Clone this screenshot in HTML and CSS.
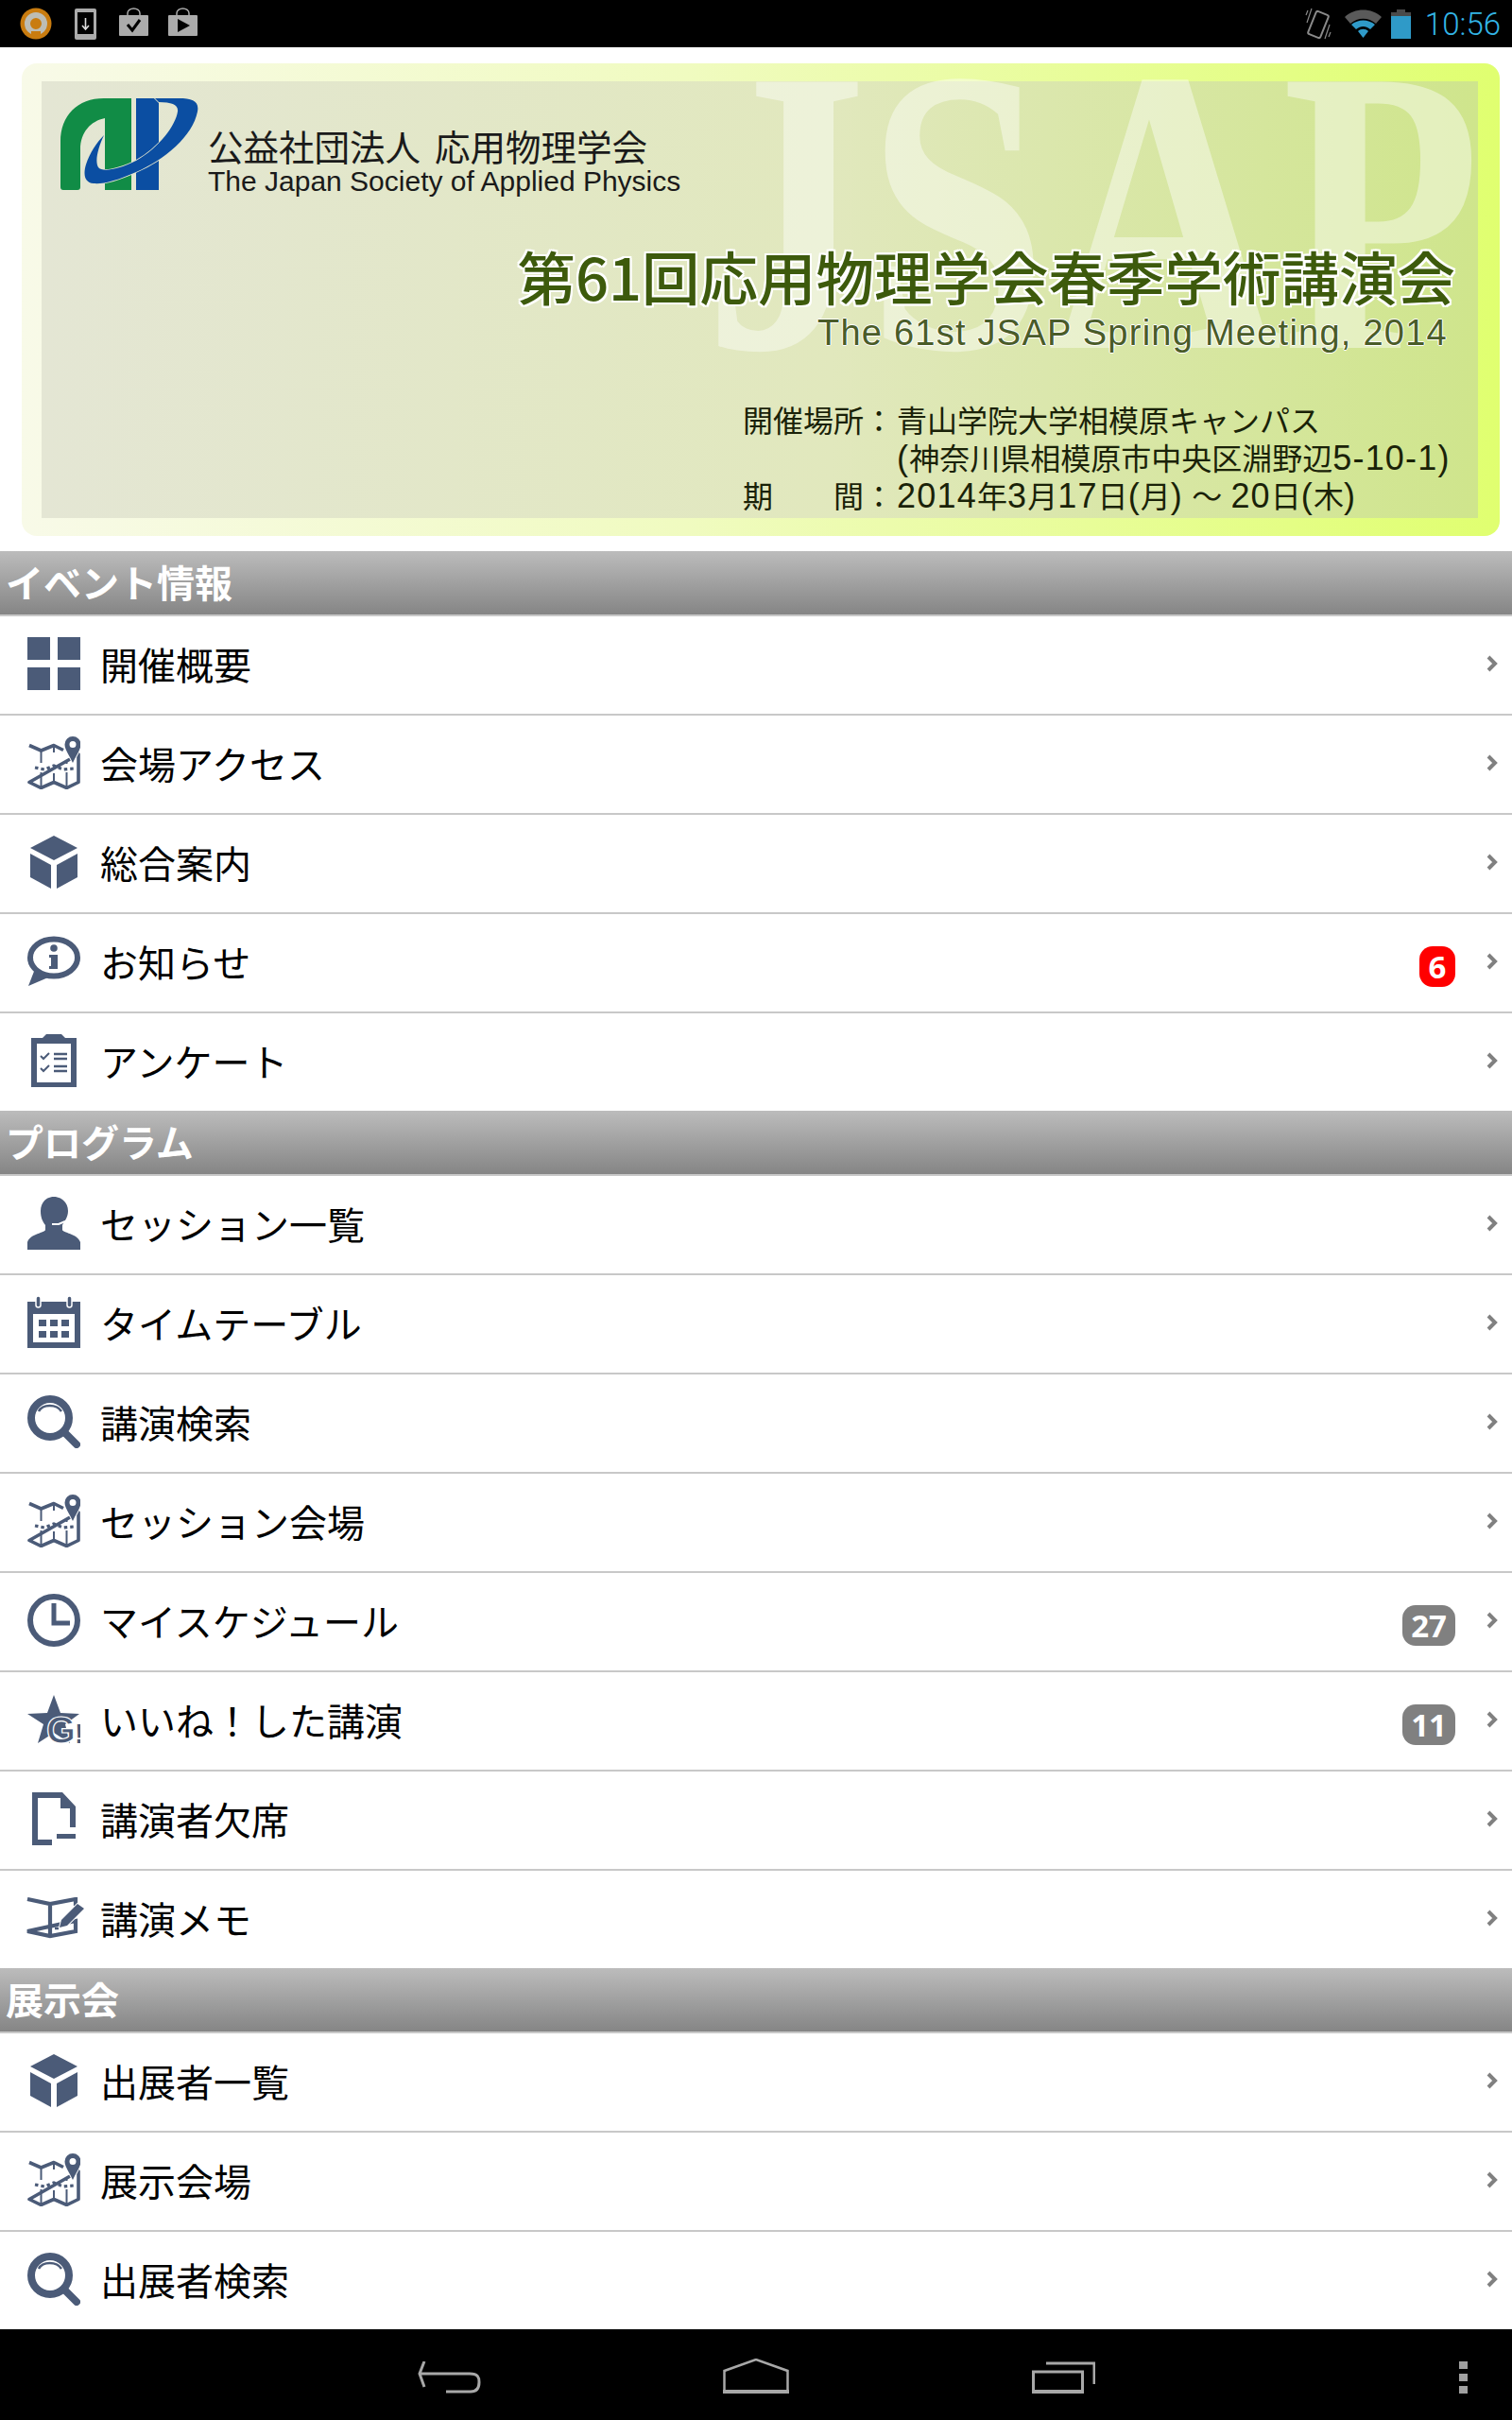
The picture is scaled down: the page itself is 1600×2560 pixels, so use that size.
FILE: index.html
```html
<!DOCTYPE html>
<html lang="ja">
<head>
<meta charset="utf-8">
<title>第61回応用物理学会春季学術講演会</title>
<link rel="stylesheet" href="styles.css">
</head>
<body>
<svg class="defs" width="0" height="0" aria-hidden="true">
  <defs>
    <symbol id="i-grid" viewBox="0 0 56 56"><rect x="0" y="0" width="24" height="24"/><rect x="32" y="0" width="24" height="24"/><rect x="0" y="32" width="24" height="24"/><rect x="32" y="32" width="24" height="24"/></symbol>
    <symbol id="i-map" viewBox="0 0 56 56"><path d="M2 9.500 14.500 15 28 9.500 38 14.500M54 19V48.500L41.500 54.500 28 48.500 14.500 54.500 2 48.500Z" fill="none" stroke="#4b5b78" stroke-width="3.600" stroke-linejoin="round"/><path d="M14.500 16V28M14.500 38V54M41.500 26V29M41.500 38V54M28 10V17M28 39V48" fill="none" stroke="#4b5b78" stroke-width="2"/><path d="M8 33 L18 35 L28 31 L38 35 L49 34" fill="none" stroke="#4b5b78" stroke-width="3.200" stroke-dasharray="3.500 3"/><path fill-rule="evenodd" stroke="#fff" stroke-width="2" paint-order="stroke" d="M48 0a8.500 8.500 0 0 1 8.500 8.500C56.500 14 51 21 48 28 45 21 39.500 14 39.500 8.500A8.500 8.500 0 0 1 48 0ZM48 5a3.500 3.500 0 1 0 0 7 3.500 3.500 0 0 0 0-7Z"/></symbol>
    <symbol id="i-cube" viewBox="0 0 56 56"><path d="M28 0 53 13 28 26 3 13Z"/><path d="M3 19 25 31V56L3 44Z"/><path d="M31 31 53 19V44L31 56Z"/></symbol>
    <symbol id="i-info" viewBox="0 0 56 56"><path d="M8 36 1 54 22 45Z"/><ellipse cx="28" cy="24" rx="25" ry="19.500" fill="#fff" stroke="#4b5b78" stroke-width="6"/><circle cx="28" cy="14" r="3.800"/><path d="M23 21H32V36H23V33H25V24H23Z"/></symbol>
    <symbol id="i-clip" viewBox="0 0 56 56"><path fill-rule="evenodd" d="M4 4h12l4-4h16l4 4h12v53H4ZM10 10V51H46V10Z"/><path d="M14 23l3 3 6-6M14 36l3 3 6-6" fill="none" stroke="#4b5b78" stroke-width="2"/><path d="M28 21h14M28 26h14M28 34h14M28 39h14" fill="none" stroke="#4b5b78" stroke-width="2.600"/></symbol>
    <symbol id="i-person" viewBox="0 0 56 56"><path d="M28 0C36 0 43 6 43 15 43 22 39 26 37 30V35C37 38 53 39 56 48V56H0V48C3 39 19 38 19 35V30C16 26 14 22 14 15 14 6 20 0 28 0Z"/><path d="M26 29H33L40 26" fill="none" stroke="#fff" stroke-width="2"/></symbol>
    <symbol id="i-cal" viewBox="0 0 56 56"><path fill-rule="evenodd" d="M0 6H56V55H0ZM6 19V49H50V19Z"/><rect x="9" y="0" width="5" height="12" rx="2.500" fill="#4b5b78" stroke="#fff" stroke-width="1.500"/><rect x="42" y="0" width="5" height="12" rx="2.500" fill="#4b5b78" stroke="#fff" stroke-width="1.500"/><path d="M12 25h8v7h-8zM24 25h8v7h-8zM36 25h8v7h-8zM12 37h8v7h-8zM24 37h8v7h-8zM36 37h8v7h-8z"/></symbol>
    <symbol id="i-search" viewBox="0 0 56 56"><circle cx="24" cy="24" r="20" fill="none" stroke="#4b5b78" stroke-width="8"/><path d="M40 40 52 52" fill="none" stroke="#4b5b78" stroke-width="8" stroke-linecap="round"/><path d="M12 17C16 9 31 9 36 17" fill="none" stroke="#4b5b78" stroke-width="2.500"/></symbol>
    <symbol id="i-clock" viewBox="0 0 56 56"><circle cx="28" cy="28" r="25" fill="none" stroke="#4b5b78" stroke-width="6"/><path d="M28 10V31H45" fill="none" stroke="#4b5b78" stroke-width="5"/></symbol>
    <symbol id="i-star" viewBox="0 0 56 56"><path d="M28 2 35 21 55 22 40 33 45 53 28 42 11 53 17 33 0 22 21 21Z"/><text x="20" y="53" class="star-g">G</text><text x="50" y="53" class="star-x">!</text></symbol>
    <symbol id="i-doc" viewBox="0 0 56 56"><path d="M5 0H37L51 15V37H45V17H35V6H11V50H26V56H5Z"/><rect x="31" y="44" width="20" height="5"/></symbol>
    <symbol id="i-book" viewBox="0 0 62 44"><path d="M2 2 26 7 53 2V9M53 25V36L26 41 2 36ZM26 7V41" fill="none" stroke="#4b5b78" stroke-width="4.200"/><path d="M55 7 62 12 44 30 36 32 38 24Z" stroke="#fff" stroke-width="2" paint-order="stroke"/><path d="M31 33h4" stroke="#4b5b78" stroke-width="2.500"/></symbol>
    <symbol id="i-chev" viewBox="0 0 12 18"><path d="M2 2 9 9 2 16" fill="none" stroke="#808080" stroke-width="4"/></symbol>
  </defs>
</svg>

<div class="screen">
  <header class="status">
    <div class="status-left">
      <svg class="st-app" viewBox="0 0 34 34"><ellipse cx="17" cy="17" rx="16.500" ry="16.500" fill="#c97c10"/><circle cx="17" cy="17" r="9" fill="none" stroke="#bdbdb5" stroke-width="6"/><path d="M12 25 h10 v7 h-10z" fill="#c97c10"/></svg>
      <svg class="st-dl" viewBox="0 0 23 33"><rect width="23" height="33" rx="2" fill="#ababab"/><rect x="3" y="4" width="17" height="23" fill="#000"/><path d="M11.500 10V21M8 18l3.500 4 3.500-4" fill="none" stroke="#ddd" stroke-width="1.600"/></svg>
      <svg class="st-bag" viewBox="0 0 31 30"><path d="M9 9V6a6.500 5 0 0 1 13 0V9" fill="none" stroke="#ababab" stroke-width="1.500"/><rect y="8" width="31" height="22" rx="1" fill="#ababab"/><path d="M9 18l5 6 8-11" fill="none" stroke="#000" stroke-width="3"/></svg>
      <svg class="st-bag" viewBox="0 0 31 30"><path d="M9 9V6a6.500 5 0 0 1 13 0V9" fill="none" stroke="#ababab" stroke-width="1.500"/><rect y="8" width="31" height="22" rx="1" fill="#ababab"/><path d="M10 12 23 19 10 26Z" fill="#000"/></svg>
    </div>
    <div class="status-right">
      <svg class="st-vib" viewBox="0 0 28 34"><rect x="7" y="5" width="14" height="26" rx="2" transform="rotate(22 14 18)" fill="none" stroke="#8a8a8a" stroke-width="2"/><path d="M2 16 7 1M26 18 21 33M1 8 3 3M27 26 25 31" stroke="#8a8a8a" stroke-width="1.200" fill="none"/></svg>
      <svg class="st-wifi" viewBox="0 0 39 30"><path d="M0 8C10-2 29-2 39 8L33 15C25 8 14 8 6 15Z" fill="#5a5a5a"/><path d="M7 16C14 10 25 10 32 16L27 21C22 17 17 17 12 21Z" fill="#2f9ac8"/><path d="M14 23C17 20 22 20 25 23L19.500 30Z" fill="#2f9ac8"/></svg>
      <svg class="st-batt" viewBox="0 0 21 31"><rect x="6" y="0" width="9" height="3" fill="#4a4a4a"/><rect y="3" width="21" height="4" fill="#4a4a4a"/><rect y="7" width="21" height="24" fill="#2f9ac8"/></svg>
      <span class="st-time">10:56</span>
    </div>
  </header>

  <main class="content">
    <section class="banner-wrap">
      <div class="banner">
        <span class="watermark">JSAP</span>
        <div class="banner-inner">
          <div class="org">
            <svg class="org-logo" viewBox="0 0 146 98">
              <path d="M0 94V46C0 18 18 0 46 0H75V97H47V21C32 24 21 36 21 54V94Q21 97 18 97H3Q0 97 0 94Z" fill="#118c46"/>
              <path d="M80 0H104V97H80Z" fill="#0b4ea2"/>
              <path d="M100 0H125C140 0 147 3 145 14 140 40 110 65 80 78 60 87 45 91 35 90 25 89 24 80 27 70 31 58 38 47 46 39 40 52 36 66 40 73 44 78 60 76 80 66 105 52 122 28 124 14 125 7 118 4 104 4Z" fill="#0b4ea2" stroke="#e3e6cf" stroke-width="1.500" paint-order="stroke"/>
            </svg>
            <div class="org-names">
              <div class="org-ja"><span>公益社団法人</span><span>応用物理学会</span></div>
              <div class="org-en">The Japan Society of Applied Physics</div>
            </div>
          </div>
          <h1 class="meet-ja">第61回応用物理学会春季学術講演会</h1>
          <p class="meet-en">The 61st JSAP Spring Meeting, 2014</p>
          <dl class="meet-info">
            <dt>開催場所</dt><dd>：</dd><dd class="val">青山学院大学相模原キャンパス</dd>
            <dt></dt><dd></dd><dd class="val"><span class="num">(</span>神奈川県相模原市中央区淵野辺<span class="num">5-10-1)</span></dd>
            <dt class="spread"><span>期</span><span>間</span></dt><dd>：</dd><dd class="val"><span class="num">2014</span>年<span class="num">3</span>月<span class="num">17</span>日<span class="num">(</span>月<span class="num">)</span> ～ <span class="num">20</span>日<span class="num">(</span>木<span class="num">)</span></dd>
          </dl>
        </div>
      </div>
    </section>

    <section>
      <h2 class="sec">イベント情報</h2>
      <ul class="rows">
        <li class="row"><svg class="ic"><use href="#i-grid"/></svg><span class="lbl">開催概要</span><svg class="chev"><use href="#i-chev"/></svg></li>
        <li class="row"><svg class="ic"><use href="#i-map"/></svg><span class="lbl">会場アクセス</span><svg class="chev"><use href="#i-chev"/></svg></li>
        <li class="row"><svg class="ic"><use href="#i-cube"/></svg><span class="lbl">総合案内</span><svg class="chev"><use href="#i-chev"/></svg></li>
        <li class="row"><svg class="ic"><use href="#i-info"/></svg><span class="lbl">お知らせ</span><span class="badge red">6</span><svg class="chev"><use href="#i-chev"/></svg></li>
        <li class="row"><svg class="ic"><use href="#i-clip"/></svg><span class="lbl">アンケート</span><svg class="chev"><use href="#i-chev"/></svg></li>
      </ul>
    </section>

    <section>
      <h2 class="sec">プログラム</h2>
      <ul class="rows">
        <li class="row"><svg class="ic"><use href="#i-person"/></svg><span class="lbl">セッション一覧</span><svg class="chev"><use href="#i-chev"/></svg></li>
        <li class="row"><svg class="ic"><use href="#i-cal"/></svg><span class="lbl">タイムテーブル</span><svg class="chev"><use href="#i-chev"/></svg></li>
        <li class="row"><svg class="ic"><use href="#i-search"/></svg><span class="lbl">講演検索</span><svg class="chev"><use href="#i-chev"/></svg></li>
        <li class="row"><svg class="ic"><use href="#i-map"/></svg><span class="lbl">セッション会場</span><svg class="chev"><use href="#i-chev"/></svg></li>
        <li class="row"><svg class="ic"><use href="#i-clock"/></svg><span class="lbl">マイスケジュール</span><span class="badge">27</span><svg class="chev"><use href="#i-chev"/></svg></li>
        <li class="row"><svg class="ic"><use href="#i-star"/></svg><span class="lbl">いいね！した講演</span><span class="badge">11</span><svg class="chev"><use href="#i-chev"/></svg></li>
        <li class="row"><svg class="ic"><use href="#i-doc"/></svg><span class="lbl">講演者欠席</span><svg class="chev"><use href="#i-chev"/></svg></li>
        <li class="row"><svg class="ic ic-book"><use href="#i-book"/></svg><span class="lbl">講演メモ</span><svg class="chev"><use href="#i-chev"/></svg></li>
      </ul>
    </section>

    <section>
      <h2 class="sec">展示会</h2>
      <ul class="rows">
        <li class="row"><svg class="ic"><use href="#i-cube"/></svg><span class="lbl">出展者一覧</span><svg class="chev"><use href="#i-chev"/></svg></li>
        <li class="row"><svg class="ic"><use href="#i-map"/></svg><span class="lbl">展示会場</span><svg class="chev"><use href="#i-chev"/></svg></li>
        <li class="row"><svg class="ic"><use href="#i-search"/></svg><span class="lbl">出展者検索</span><svg class="chev"><use href="#i-chev"/></svg></li>
      </ul>
    </section>
  </main>

  <footer class="nav">
    <svg class="nav-back" viewBox="0 0 67 34"><path d="M7 0 2 13 7 27M3 13H55C64 13 65 17 65 22 65 29 62 32 56 32H30" fill="none" stroke="#a8a8a8" stroke-width="3"/></svg>
    <svg class="nav-home" viewBox="0 0 70 37"><path d="M1.500 13 35 1 68.500 13V35.500H1.500Z" fill="none" stroke="#a8a8a8" stroke-width="2.500"/><path d="M0 33H70V37H0Z" fill="#a8a8a8"/></svg>
    <svg class="nav-recent" viewBox="0 0 67 34"><path d="M15 2H66V24" fill="none" stroke="#a8a8a8" stroke-width="3"/><rect x="1.500" y="11" width="52" height="21.500" fill="none" stroke="#a8a8a8" stroke-width="3"/><path d="M0 30H54V34H0Z" fill="#a8a8a8"/></svg>
    <div class="nav-menu"><i></i><i></i><i></i></div>
  </footer>
</div>
</body>
</html>
```
FILE: styles.css
```css
* { box-sizing: border-box; }
html, body { margin: 0; padding: 0; background: #fff; }
body { font-family: "Noto Sans CJK JP", "Noto Sans", sans-serif; color: #000; }
.defs { position: absolute; }
.screen { width: 1600px; height: 2560px; display: flex; flex-direction: column; overflow: hidden; }

/* status bar */
.status { height: 50px; background: #000; display: flex; justify-content: space-between; align-items: center; flex: none; }
.status-left { display: flex; align-items: center; padding-left: 21px; gap: 24px; }
.st-app { width: 34px; height: 34px; }
.st-dl { width: 23px; height: 33px; }
.st-bag { width: 31px; height: 30px; margin-top: -4px; }
.status-left .st-bag + .st-bag { margin-left: -3px; }
.status-right { display: flex; align-items: center; gap: 12px; padding-right: 12px; }
.st-vib { width: 28px; height: 34px; margin-right: 2px; }
.st-wifi { width: 39px; height: 30px; }
.st-batt { width: 21px; height: 31px; margin-right: 3px; margin-left: -2px; }
.st-time { font-family: Roboto, sans-serif; font-weight: 300; font-size: 33px; line-height: 1; color: #33b5e5; }

/* banner */
.content { flex: 1; min-height: 0; }
.banner-wrap { padding: 17px 13px 16px 23px; }
.banner { position: relative; height: 500px; border-radius: 16px; padding: 19px 23px 19px 21px;
  background: linear-gradient(90deg, #f8fae8 0%, #f0fbc0 45%, #e0ff70 100%); }
.banner-inner { position: relative; height: 462px; padding: 18px 0 0 20px; display: flex; flex-direction: column; align-items: flex-start;
  background: linear-gradient(90deg, #e4e6d4 0%, #e1e8bd 55%, #cfe58c 100%); }
.watermark { position: absolute; left: 722px; top: -59px; font-family: "Liberation Serif", serif; font-weight: 700; font-size: 430px; line-height: 1; color: rgba(255,255,255,.42); transform: scaleX(.8); transform-origin: 0 0; z-index: 1; white-space: nowrap; }
.org { display: flex; align-items: flex-start; gap: 10px; position: relative; z-index: 2; }
.org-logo { width: 146px; height: 98px; flex: none; }
.org-names { padding-top: 28px; color: #1a1a1a; }
.org-ja { display: flex; gap: 15px; font-size: 37.500px; line-height: 44px; }
.org-en { font-family: "Liberation Sans", sans-serif; font-size: 30px; line-height: 28px; margin-top: 2px; }
.meet-ja { position: relative; z-index: 2; margin: 50px 0 0; align-self: flex-end; margin-right: 24px; font-weight: 500; font-size: 61.500px; line-height: 72px; color: #3d5a0c; white-space: nowrap;
  text-shadow: 2px 0 0 #fff, -2px 0 0 #fff, 0 2px 0 #fff, 0 -2px 0 #fff, 2px 2px 0 #fff, -2px -2px 0 #fff, 2px -2px 0 #fff, -2px 2px 0 #fff; }
.meet-en { position: relative; z-index: 2; margin: 2px 0 0; align-self: flex-end; margin-right: 32px; font-family: "Liberation Sans", sans-serif; font-size: 38px; line-height: 44px; letter-spacing: 1.250px; color: #4a5c28; white-space: nowrap;
  text-shadow: 1px 0 0 #fff, -1px 0 0 #fff, 0 1px 0 #fff, 0 -1px 0 #fff; }
.meet-info { position: relative; z-index: 2; margin: 50px 0 0; align-self: flex-start; margin-left: 722px; display: grid; grid-template-columns: 128px 32px auto; font-size: 32px; line-height: 39.500px; color: #1a2208; white-space: nowrap; }
.meet-info dt, .meet-info dd { margin: 0; }
.val { padding-left: 3px; word-spacing: 2px; }
.num { font-family: "Liberation Sans", sans-serif; font-size: 36px; letter-spacing: 1.200px; }
.spread { display: flex; justify-content: space-between; }

/* list */
.sec { margin: 0; height: 67px; padding-left: 6px; font-size: 40px; font-weight: 700; line-height: 64px; color: #fff; background: linear-gradient(180deg, #bcbcbc 0%, #858585 100%); }
.rows { list-style: none; margin: 0; padding: 0; }
.row { height: 105px; display: flex; align-items: center; padding: 0 15px 3px 29px; border-top: 2px solid #c8c8c8; }
.ic { width: 56px; height: 56px; flex: none; fill: #4b5b78; overflow: visible; }
.ic-book { width: 62px; height: 44px; margin: 0 -4px 0 -2px; }
.star-g { font-family: "Liberation Sans", sans-serif; font-weight: 700; font-size: 40px; fill: #4b5b78; stroke: #fff; stroke-width: 1.200px; }
.star-x { font-family: "Liberation Sans", sans-serif; font-weight: 700; font-size: 30px; fill: #4b5b78; }
.lbl { flex: 1; margin-left: 21px; font-size: 40px; line-height: 1; }
.badge { height: 43px; min-width: 56px; margin-top: 10px; padding: 0 7px; border-radius: 14px; background: #808080; color: #fff; font-family: "Open Sans", sans-serif; font-weight: 700; font-size: 33px; line-height: 43px; text-align: center; }
.badge.red { background: #f00; min-width: 38px; padding: 0 5px; }
.chev { width: 12px; height: 18px; flex: none; margin-left: 33px; }

/* nav */
.nav { height: 96px; flex: none; background: #000; display: flex; align-items: flex-start; padding: 31px 0 0 442px; }
.nav-back { width: 67px; height: 34px; flex: none; margin-top: 3px; }
.nav-home { width: 70px; height: 37px; flex: none; margin-left: 256px; }
.nav-recent { width: 67px; height: 34px; flex: none; margin: 3px 0 0 257px; }
.nav-menu { width: 9px; height: 34px; margin: 3px 0 0 385px; display: flex; flex-direction: column; justify-content: space-between; }
.nav-menu i { display: block; height: 8px; background: #a0a0a0; }
```
